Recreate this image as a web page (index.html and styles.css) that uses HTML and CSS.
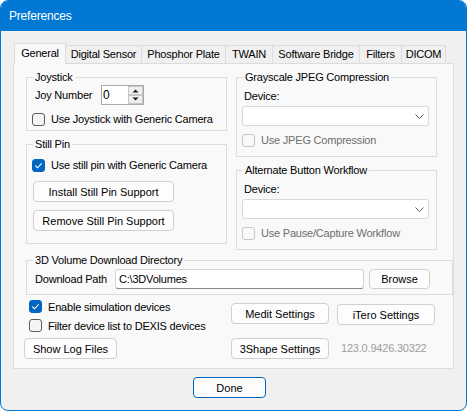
FILE: index.html
```html
<!DOCTYPE html>
<html>
<head>
<meta charset="utf-8">
<title>Preferences</title>
<link rel="stylesheet" href="styles.css">
</head>
<body>
<div class="window">
  <div class="titlebar">Preferences</div>
  <div class="client">
    <div class="tabs">
      <div class="tab active t-general">General</div>
      <div class="tab t-digital">Digital Sensor</div>
      <div class="tab t-phosphor">Phosphor Plate</div>
      <div class="tab t-twain">TWAIN</div>
      <div class="tab t-bridge">Software Bridge</div>
      <div class="tab t-filters">Filters</div>
      <div class="tab t-dicom">DICOM</div>
    </div>
    <div class="panel">
      <div class="groups">
        <div class="col">
          <div class="group joystick">
            <div class="legend">Joystick</div>
            <div class="spin-row">
              <span class="joy-label">Joy Number</span>
              <div class="spinner">
                <span class="spin-value">0</span>
                <svg class="spin" width="15" height="18" viewBox="0 0 15 18">
                  <rect x="0.5" y="0.5" width="14" height="8" fill="#efefef" stroke="#c6c6c6"/>
                  <rect x="0.5" y="9.5" width="14" height="8" fill="#efefef" stroke="#c6c6c6"/>
                  <path d="M4.5 6.5h6L7.5 3.5z" fill="#1a1a1a"/>
                  <path d="M4.5 11.5h6L7.5 14.5z" fill="#1a1a1a"/>
                </svg>
              </div>
            </div>
            <div class="check"><span class="box"></span><span>Use Joystick with Generic Camera</span></div>
          </div>
          <div class="group still">
            <div class="legend">Still Pin</div>
            <div class="check"><span class="box checked"><svg width="11" height="11" viewBox="0 0 11 11"><path d="M2.3 5.6l2.2 2.2 4.2-4.4" stroke="#fff" stroke-width="1.1" fill="none"/></svg></span><span>Use still pin with Generic Camera</span></div>
            <button class="btn pin-btn">Install Still Pin Support</button>
            <button class="btn pin-btn">Remove Still Pin Support</button>
          </div>
        </div>
        <div class="col">
          <div class="group jpeg">
            <div class="legend">Grayscale JPEG Compression</div>
            <div class="device">Device:</div>
            <div class="combo"><svg width="9" height="5" viewBox="0 0 9 5"><path d="M0.5 0.5l4 4 4-4" stroke="#5a5a5a" fill="none"/></svg></div>
            <div class="check disabled"><span class="box"></span><span>Use JPEG Compression</span></div>
          </div>
          <div class="group jpeg">
            <div class="legend">Alternate Button Workflow</div>
            <div class="device">Device:</div>
            <div class="combo"><svg width="9" height="5" viewBox="0 0 9 5"><path d="M0.5 0.5l4 4 4-4" stroke="#5a5a5a" fill="none"/></svg></div>
            <div class="check disabled"><span class="box"></span><span>Use Pause/Capture Workflow</span></div>
          </div>
        </div>
      </div>
      <div class="group vol">
        <div class="legend">3D Volume Download Directory</div>
        <div class="path-row">
          <span class="path-label">Download Path</span>
          <div class="input">C:\3DVolumes</div>
          <button class="btn browse">Browse</button>
        </div>
      </div>
      <div class="bottom">
        <div class="checks">
          <div class="check"><span class="box checked"><svg width="11" height="11" viewBox="0 0 11 11"><path d="M2.3 5.6l2.2 2.2 4.2-4.4" stroke="#fff" stroke-width="1.1" fill="none"/></svg></span><span>Enable simulation devices</span></div>
          <div class="check"><span class="box"></span><span>Filter device list to DEXIS devices</span></div>
        </div>
        <div><button class="btn wide medit">Medit Settings</button></div>
        <div><button class="btn wide itero">iTero Settings</button></div>
        <div><button class="btn logs">Show Log Files</button></div>
        <div><button class="btn wide">3Shape Settings</button></div>
        <div class="version">123.0.9426.30322</div>
      </div>
    </div>
    <div class="footer"><button class="btn done">Done</button></div>
  </div>
</div>
</body>
</html>
```
FILE: styles.css
```css
* { box-sizing: border-box; }
body {
  margin: 0;
  background: #ffffff;
  font-family: "Liberation Sans", Arial, sans-serif;
  font-size: 11px;
  letter-spacing: -0.2px;
  color: #000;
}
.window {
  width: 467px;
  height: 411px;
  border: 1px solid #0078d4;
  border-radius: 8px;
  background: #f0f0f0;
  overflow: hidden;
}
.titlebar {
  height: 30px;
  background: #0078d4;
  color: #fff;
  font-size: 12px;
  line-height: 30px;
  padding-left: 8px;
}
.client { padding: 12px 12px 0 12px; }
.tabs {
  display: flex;
  align-items: flex-end;
  height: 20px;
  padding-left: 1px;
}
.tab {
  height: 18px;
  border: 1px solid #dcdcdc;
  border-bottom: 0;
  border-right: 0;
  line-height: 17px;
  text-align: center;
  white-space: nowrap;
  background: #f0f0f0;
}
.tab:last-child { border-right: 1px solid #dcdcdc; }
.tab.active {
  height: 21px;
  margin-bottom: -1px;
  margin-right: -1px;
  border-right: 1px solid #dcdcdc;
  background: #f9f9f9;
  line-height: 19px;
  position: relative;
  z-index: 1;
}
.t-general { width: 52px; }
.t-digital { width: 76px; }
.t-phosphor { width: 84px; }
.t-twain { width: 47px; }
.t-bridge { width: 87px; }
.t-filters { width: 42px; }
.t-dicom { width: 45px; }

.panel {
  width: 441px;
  height: 306px;
  border: 1px solid #dcdcdc;
  background: #f9f9f9;
  padding: 13px 0 0 12px;
}
.groups {
  display: grid;
  grid-template-columns: 201px 201px;
  column-gap: 9px;
}
.col {
  display: flex;
  flex-direction: column;
  gap: 13px;
}
.group {
  border: 1px solid #dcdcdc;
  padding: 0 0 0 5px;
}
.legend {
  width: max-content;
  margin: -8px 0 0 1px;
  padding: 0 2px;
  line-height: 14px;
  background: #f9f9f9;
}
.joystick { height: 54px; }
.still { height: 100px; }
.jpeg { height: 80px; }

.spin-row {
  display: flex;
  align-items: center;
  height: 20px;
  margin-top: 1px;
}
.joy-label { width: 66px; margin-left: 3px; }
.spinner {
  width: 43px;
  height: 20px;
  border: 1px solid #a9a9a9;
  background: #fff;
  display: flex;
  align-items: center;
  padding-right: 0;
}
.spin-value { flex: 1; padding-left: 1px; line-height: 18px; font-size: 12px; }
.spin { display: block; }

.check {
  display: flex;
  align-items: center;
  gap: 6px;
  height: 16px;
  white-space: nowrap;
}
.box {
  flex: none;
  width: 13px;
  height: 13px;
  border: 1px solid #5d5d5d;
  border-radius: 3px;
  background: #f5f5f5;
  display: flex;
}
.box.checked { background: #0067c0; border-color: #0067c0; }
.box svg { display: block; }
.check.disabled { color: #6d6d6d; }
.check.disabled .box { border-color: #c5c5c5; background: #f9f9f9; }
.joystick .check, .still .check, .jpeg .check { margin-top: 6px; }

.btn {
  display: block;
  height: 21px;
  padding: 0;
  border: 1px solid #d0d0d0;
  border-radius: 4px;
  background: #fdfdfd;
  font: inherit;
  color: #000;
  text-align: center;
}
.pin-btn { width: 141px; margin: 8px 0 0 1px; }

.device { margin: 4px 0 0 2px; line-height: 16px; }
.combo {
  width: 187px;
  height: 20px;
  margin-top: 2px;
  border: 1px solid #d9d9d9;
  border-radius: 3px;
  background: #fff;
  display: flex;
  align-items: center;
  justify-content: flex-end;
  padding-right: 4px;
}
.combo svg { display: block; }

.vol { height: 35px; margin-top: 10px; }
.path-row {
  display: flex;
  align-items: center;
  height: 20px;
  margin-top: 2px;
}
.path-label { width: 80px; margin-left: 3px; }
.input {
  width: 249px;
  height: 20px;
  border: 1px solid #d4d4d4;
  border-bottom-color: #868686;
  border-radius: 3px;
  background: #fff;
  padding-left: 3px;
  line-height: 18px;
}
.browse { width: 61px; height: 20px; margin-left: 5px; }

.bottom {
  display: grid;
  grid-template-columns: 207px 106px auto;
  row-gap: 3px;
  margin: 2px 0 0 -2px;
}
.checks { padding-left: 5px; }
.checks .check { height: 19px; }
.wide { width: 98px; }
.medit { margin-top: 6px; }
.itero { margin-top: 7px; }
.logs { width: 93px; }
.version { padding-left: 4px; line-height: 21px; color: #9d9d9d; }

.footer { padding: 8px 0 0 180px; }
.done { width: 73px; border-color: #0067c0; }
```
